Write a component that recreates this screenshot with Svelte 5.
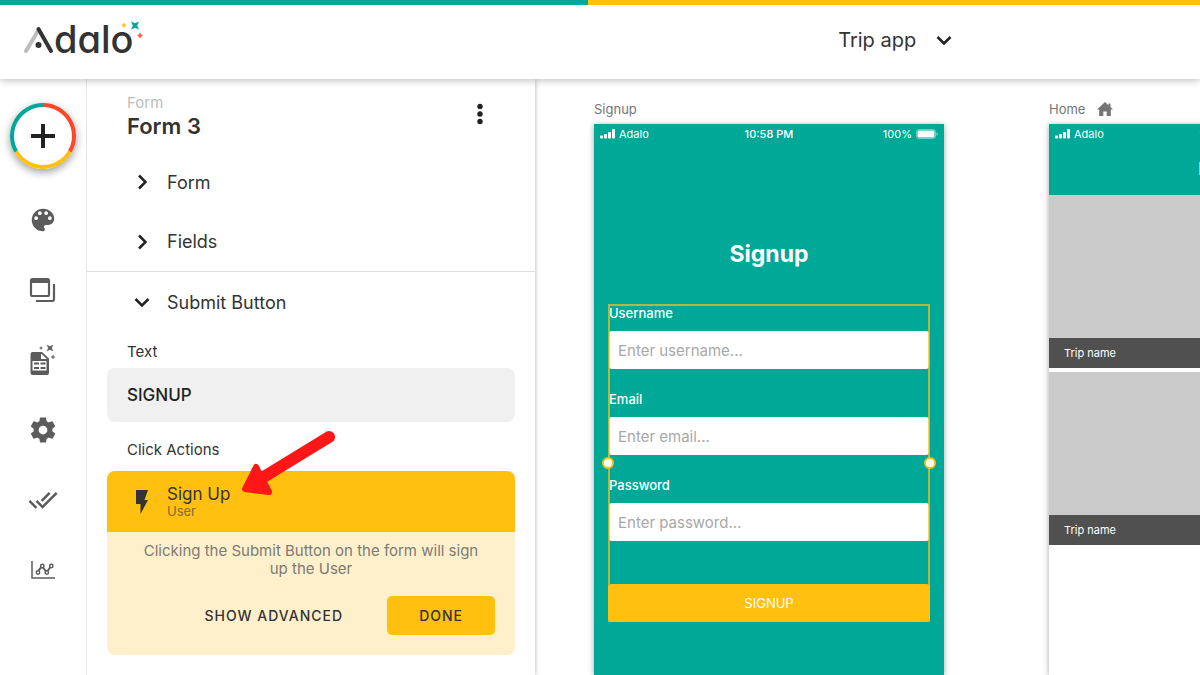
<script lang="ts">
  const tools = ["Branding", "Screens", "Database", "Settings", "Publish", "Analytics"];
  const fields = [
    { id: "username", label: "Username", type: "text", placeholder: "Enter username..." },
    { id: "email", label: "Email", type: "email", placeholder: "Enter email..." },
    { id: "password", label: "Password", type: "password", placeholder: "Enter password..." },
  ];
  const trips = ["Trip name", "Trip name"];

  let buttonText = $state("SIGNUP");
</script>

{#snippet chevron(open: boolean)}
  <svg class="chevron" viewBox="0 0 20 20" aria-hidden="true">
    <path d={open ? "M3.500 7l6.500 6.500L16.500 7" : "M7 3.500l6.500 6.500L7 16.500"} />
  </svg>
{/snippet}

{#snippet statusBar()}
  <div class="status">
    <span class="status__carrier">
      <svg width="15" height="10" viewBox="0 0 15 10" fill="#fff" aria-hidden="true">
        <rect x="0" y="6.500" width="3" height="3" rx=".8" />
        <rect x="4" y="5" width="3" height="4.500" rx=".8" />
        <rect x="8" y="3" width="3" height="6.500" rx=".8" />
        <rect x="12" y="0" width="3" height="9.500" rx=".8" />
      </svg>
      Adalo
    </span>
    <span class="status__time">10:58 PM</span>
    <span class="status__battery">
      100%
      <svg width="22" height="10" viewBox="0 0 22 10" aria-hidden="true">
        <rect x=".5" y=".5" width="19" height="9" rx="2.500" fill="none" stroke="#fff" stroke-opacity=".45" />
        <rect x="1.500" y="1.500" width="17" height="7" rx="1.500" fill="#fff" />
        <path d="M20.500 3.300q1.500.6 1.500 1.700t-1.500 1.700z" fill="#fff" fill-opacity=".5" />
      </svg>
    </span>
  </div>
{/snippet}

<div class="app">
  <header class="topbar">
    <a class="logo" href="#home" aria-label="Adalo">
      <svg class="logo__mark" width="30" height="28" viewBox="0 0 30 28" aria-hidden="true">
        <path d="M2 25L14.500 4" stroke="#bdbdbd" stroke-width="4" stroke-linecap="round" />
        <path d="M14.500 3L27 25" stroke="#333" stroke-width="4" stroke-linecap="round" />
        <circle cx="14.500" cy="19" r="3" fill="#333" />
      </svg>
      <span class="logo__text">dalo</span>
      <svg class="logo__stars" width="22" height="18" viewBox="0 0 22 18" aria-hidden="true">
        <path d="M3 2l.8 1.400 1.400.8-1.400.8L3 6.400 2.200 5 .8 4.200l1.400-.8z" fill="#ffc010" stroke="#ffc010" stroke-width=".6" />
        <path d="M10 .5l4 1.800 4-1.800-1.800 4 1.800 4-4-1.800-4 1.800 1.800-4z" fill="#00a898" />
        <path d="M19 12l.9 1.700 1.700.9-1.700.9-.9 1.700-.9-1.700-1.700-.9 1.700-.9z" fill="#ff5233" stroke="#ff5233" stroke-width=".4" />
      </svg>
    </a>
    <button class="app-menu" type="button">
      Trip app
      {@render chevron(true)}
    </button>
  </header>

  <div class="workspace">
    <nav class="rail" aria-label="Tools">
      <button class="add" type="button" aria-label="Add">
        <svg width="66" height="66" viewBox="0 0 66 66" fill="none" aria-hidden="true">
          <circle cx="33" cy="33" r="32" fill="#fff" />
          <path d="M33 2a31 31 0 0 1 26.850 46.500" stroke="#ff4628" stroke-width="4" />
          <path d="M59.850 48.500a31 31 0 0 1-53.700 0" stroke="#ffc010" stroke-width="4" />
          <path d="M6.150 48.500A31 31 0 0 1 33 2" stroke="#00a898" stroke-width="4" />
          <path d="M33 21v24M21 33h24" stroke="#222" stroke-width="4" />
        </svg>
      </button>
      {#each tools as tool}
        <button class="tool" type="button" aria-label={tool}>
          {#if tool === "Branding"}
            <svg viewBox="0 0 24 24" fill="currentColor">
              <path d="M12 3a9 9 0 0 0 0 18c.83 0 1.500-.67 1.500-1.500 0-.39-.15-.74-.39-1.010-.23-.26-.38-.61-.38-.99 0-.83.67-1.500 1.500-1.500H16a5 5 0 0 0 5-5c0-4.420-4.030-8-9-8zm-5.500 9a1.500 1.500 0 1 1 0-3 1.500 1.500 0 0 1 0 3zm3-4a1.500 1.500 0 1 1 0-3 1.500 1.500 0 0 1 0 3zm5 0a1.500 1.500 0 1 1 0-3 1.500 1.500 0 0 1 0 3zm3 4a1.500 1.500 0 1 1 0-3 1.500 1.500 0 0 1 0 3z" />
            </svg>
          {:else if tool === "Screens"}
            <svg viewBox="0 0 30 30" fill="none" stroke="currentColor" stroke-width="2.200">
              <rect x="3" y="4" width="18" height="17" rx="1.500" />
              <path d="M3 6h18" stroke-width="4" />
              <path d="M26 9v15q0 2-2 2H8" />
            </svg>
          {:else if tool === "Database"}
            <svg viewBox="0 0 30 30" fill="currentColor">
              <path fill-rule="evenodd" d="M4.500 7H14l7 6.500V28q0 2-2 2H4.500q-2 0-2-2V9q0-2 2-2zM13 8.500v5.500h6zM4.500 16v9.500h14V16zM6 17.500h5v2H6zm6.500 0h5v2h-5zM6 22h5v2H6zm6.500 0h5v2h-5z" />
              <path d="M19 0l3 1.400L25 0l-1.400 3L25 6l-3-1.400L19 6l1.400-3zM13 1.500l.5 1 1 .5-1 .5-.5 1-.5-1-1-.5 1-.5zM25 10l.6 1.400L27 12l-1.400.6L25 14l-.6-1.400L23 12l1.400-.6z" stroke="currentColor" stroke-width=".4" />
            </svg>
          {:else if tool === "Settings"}
            <svg viewBox="0 0 24 24" fill="currentColor">
              <path d="M19.430 12.980c.04-.32.07-.64.07-.98s-.03-.66-.07-.98l2.110-1.650c.19-.15.24-.42.12-.64l-2-3.460c-.12-.22-.39-.3-.61-.22l-2.490 1c-.52-.4-1.080-.73-1.690-.98l-.38-2.650A.49.49 0 0 0 14 2h-4c-.25 0-.46.18-.49.42l-.38 2.650c-.61.25-1.170.59-1.690.98l-2.490-1c-.23-.09-.49 0-.61.22l-2 3.460c-.13.22-.07.49.12.64l2.110 1.650c-.04.32-.07.65-.07.98s.03.66.07.98l-2.110 1.650c-.19.15-.24.42-.12.64l2 3.460c.12.22.39.3.61.22l2.490-1c.52.4 1.080.73 1.690.98l.38 2.650c.03.24.24.42.49.42h4c.25 0 .46-.18.49-.42l.38-2.650c.61-.25 1.170-.59 1.690-.98l2.490 1c.23.09.49 0 .61-.22l2-3.460c.12-.22.07-.49-.12-.64l-2.110-1.650zM12 15.500a3.500 3.500 0 1 1 0-7 3.500 3.500 0 0 1 0 7z" />
            </svg>
          {:else if tool === "Publish"}
            <svg viewBox="0 0 24 24" fill="currentColor">
              <path d="M18 7l-1.410-1.410-6.340 6.340 1.410 1.410L18 7zm4.240-1.410L11.660 16.170 7.480 12l-1.410 1.410L11.660 19l12-12-1.420-1.410zM.41 13.410L6 19l1.410-1.410L1.830 12 .41 13.410z" />
            </svg>
          {:else}
            <svg viewBox="0 0 30 30" fill="none" stroke="currentColor" stroke-width="1.500">
              <path d="M4 6v17h23" />
              <path d="M10.500 15.500l3-3.500M15 12.500l3 4M19.500 16l3-4" stroke-width="2" />
              <circle cx="10" cy="17.500" r="1.700" />
              <circle cx="14.300" cy="11" r="1.700" />
              <circle cx="18.800" cy="17.500" r="1.700" />
              <circle cx="23.300" cy="11" r="1.700" />
            </svg>
          {/if}
        </button>
      {/each}
    </nav>

    <aside class="panel">
      <div class="panel__head">
        <div>
          <div class="panel__kind">Form</div>
          <h1>Form 3</h1>
        </div>
        <button class="more" type="button" aria-label="More">
          <svg width="8" height="22" viewBox="0 0 8 22" fill="#222" aria-hidden="true">
            <circle cx="4" cy="3.500" r="2.700" />
            <circle cx="4" cy="11" r="2.700" />
            <circle cx="4" cy="18.500" r="2.700" />
          </svg>
        </button>
      </div>

      <button class="section" type="button" aria-expanded="false">{@render chevron(false)}Form</button>
      <button class="section section--last" type="button" aria-expanded="false">{@render chevron(false)}Fields</button>
      <button class="section" type="button" aria-expanded="true">{@render chevron(true)}Submit Button</button>

      <div class="settings">
        <label for="button-text">Text</label>
        <input id="button-text" type="text" bind:value={buttonText} />

        <h2>Click Actions</h2>
        <section class="action">
          <div class="action__head">
            <svg class="bolt" width="14" height="26" viewBox="0 0 14 26" aria-hidden="true">
              <path d="M1 1h12L9.500 11H13L5.500 25V15H1z" fill="#333" />
            </svg>
            <div>
              <div class="action__name">Sign Up</div>
              <div class="action__target">User</div>
            </div>
            <svg class="pointer" width="96" height="68" viewBox="0 0 96 68" aria-hidden="true">
              <path d="M89 8L22 49" stroke="#ff1616" stroke-width="12" stroke-linecap="round" />
              <path d="M5 60L16 38L29 63z" fill="#ff1616" stroke="#ff1616" stroke-width="6" stroke-linejoin="round" />
            </svg>
          </div>
          <div class="action__body">
            <p>Clicking the Submit Button on the form will sign up the User</p>
            <div class="action__buttons">
              <button class="btn" type="button">SHOW ADVANCED</button>
              <button class="btn btn--primary" type="button">DONE</button>
            </div>
          </div>
        </section>
      </div>
    </aside>

    <main class="canvas">
      <section class="screen">
        <h2 class="screen__name">Signup</h2>
        <div class="phone phone--teal">
          {@render statusBar()}
          <h3 class="phone__title">Signup</h3>
          <form class="signup">
            {#each fields as field}
              <div class="signup__field">
                <label for={field.id}>{field.label}</label>
                <input id={field.id} type={field.type} placeholder={field.placeholder} />
              </div>
            {/each}
            <button class="signup__submit" type="button">{buttonText}</button>
            <div class="selection" aria-hidden="true">
              <span class="handle"></span>
              <span class="handle"></span>
            </div>
          </form>
        </div>
      </section>

      <section class="screen">
        <h2 class="screen__name">
          Home
          <svg width="16" height="14" viewBox="0 0 16 14" fill="#757575" aria-hidden="true">
            <path d="M8 0l3.500 3.200V1.500h2v3.600L16 7.500h-2.200V14H9.700V9.500H6.300V14H2.200V7.500H0z" />
          </svg>
        </h2>
        <div class="phone">
          <div class="phone__bar">
            {@render statusBar()}
            <h3>Home</h3>
          </div>
          <ul class="trips">
            {#each trips as trip}
              <li>
                <div class="trips__image"></div>
                <div class="trips__name">{trip}</div>
              </li>
            {/each}
          </ul>
        </div>
      </section>
    </main>
  </div>
</div>

<style>
  :global(body) {
    margin: 0;
  }

  .app {
    --teal: #00a898;
    --yellow: #ffc010;
    --text: #333;
    display: flex;
    flex-direction: column;
    height: 100vh;
    overflow: hidden;
    background: #fff;
    color: var(--text);
    font-family: Inter, "Liberation Sans", sans-serif;
  }

  h1,
  h2,
  h3,
  p,
  ul {
    margin: 0;
    padding: 0;
    font-weight: 400;
  }

  .app :is(*, *::before) {
    box-sizing: border-box;
  }

  button,
  input {
    border: 0;
    padding: 0;
    background: none;
    color: inherit;
    font: inherit;
  }

  /* top bar */
  .topbar {
    position: relative;
    z-index: 1;
    display: grid;
    grid-template-columns: 9fr 4fr;
    align-items: center;
    flex: none;
    padding: 5px 0 4px 24px;
    height: 79px;
    background: #fff;
    box-shadow: 0 1px 8px rgba(0, 0, 0, 0.28);
  }

  .topbar::before {
    content: "";
    position: absolute;
    inset: 0 0 auto;
    height: 5px;
    background: linear-gradient(90deg, var(--teal) 49%, var(--yellow) 49%);
  }

  .logo {
    position: relative;
    display: flex;
    align-items: center;
    justify-self: start;
    color: var(--text);
    text-decoration: none;
  }

  .logo__text {
    padding-bottom: 2px;
    font-size: 38px;
    font-weight: 500;
    line-height: 44px;
    font-feature-settings: "cv11";
  }

  .logo__stars {
    position: absolute;
    top: 4px;
    left: 97px;
  }

  .app-menu {
    display: flex;
    align-items: center;
    gap: 18px;
    justify-self: start;
    font-size: 20px;
  }

  .chevron {
    flex: none;
    width: 20px;
    height: 20px;
    fill: none;
    stroke: #222;
    stroke-width: 2.5;
  }

  .workspace {
    display: flex;
    flex: 1;
    min-height: 0;
  }

  /* tool rail */
  .rail {
    display: flex;
    flex-direction: column;
    align-items: center;
    flex: none;
    width: 87px;
    padding-top: 24px;
    border-right: 1px solid #e6e6e6;
  }

  .add {
    width: 66px;
    height: 66px;
    margin-bottom: 16px;
    border-radius: 50%;
    box-shadow: 0 3px 8px rgba(0, 0, 0, 0.4);
  }

  .add svg {
    display: block;
  }

  .tool {
    display: grid;
    place-items: center;
    flex: none;
    width: 70px;
    height: 70px;
    color: #5c5c5c;
  }

  .tool svg {
    width: 30px;
    height: 30px;
  }

  /* properties panel */
  .panel {
    flex: none;
    width: 448px;
    box-shadow: 0 0 5px rgba(0, 0, 0, 0.3);
    clip-path: inset(0 -8px 0 0);
  }

  .panel__head {
    display: flex;
    align-items: center;
    justify-content: space-between;
    height: 73px;
    padding: 0 51px 0 40px;
  }

  .panel__kind {
    color: #bdbdbd;
    font-size: 15px;
    line-height: 20px;
  }

  .panel h1 {
    font-size: 22px;
    font-weight: 600;
    line-height: 26px;
  }

  .section {
    display: flex;
    align-items: center;
    gap: 15px;
    width: 100%;
    height: 60px;
    padding-left: 45px;
    font-size: 18px;
  }

  .section--last {
    border-bottom: 1px solid #dedede;
  }

  .settings {
    display: flex;
    flex-direction: column;
    padding: 10px 20px;
  }

  .settings > label,
  .settings > h2 {
    padding-left: 20px;
    font-size: 15px;
    line-height: 20px;
  }

  .settings > input {
    height: 54px;
    margin: 6px 0 18px;
    padding: 0 20px;
    border-radius: 8px;
    background: #f0f0f0;
    color: #222;
    font-size: 17px;
    font-weight: 500;
  }

  .action {
    margin-top: 11px;
    border-radius: 8px;
    background: #fff0cc;
    font-size: 15px;
  }

  .action__head {
    position: relative;
    display: flex;
    align-items: center;
    gap: 18px;
    height: 61px;
    padding-left: 28px;
    border-radius: 8px 8px 0 0;
    background: var(--yellow);
  }

  .action__name {
    font-size: 17px;
    line-height: 18px;
  }

  .action__target {
    color: #806d3a;
    font-size: 13px;
    line-height: 16px;
  }

  .pointer {
    position: absolute;
    top: -42px;
    left: 133px;
  }

  .action__body {
    padding: 10px 20px 20px;
  }

  .action__body p {
    padding: 0 10px;
    color: #7c7a74;
    line-height: 18px;
    text-align: center;
  }

  .action__buttons {
    display: flex;
    justify-content: flex-end;
    gap: 12px;
    margin-top: 18px;
  }

  .btn {
    height: 39px;
    padding: 0 32px;
    border-radius: 5px;
    font-size: 14px;
    font-weight: 500;
    letter-spacing: 1px;
  }

  .btn--primary {
    background: var(--yellow);
  }

  /* screens */
  .canvas {
    display: flex;
    align-items: stretch;
    gap: 105px;
    flex: 1;
    min-width: 0;
    overflow: hidden;
    padding: 20px 0 0 59px;
  }

  .screen {
    display: flex;
    flex-direction: column;
    flex: none;
    width: 350px;
  }

  .screen__name {
    display: flex;
    align-items: center;
    gap: 12px;
    margin-bottom: 5px;
    color: #757575;
    font-size: 13px;
    line-height: 20px;
  }

  .phone {
    flex: 1;
    background: #fff;
    box-shadow: 0 1px 6px rgba(0, 0, 0, 0.35);
  }

  .phone--teal,
  .phone__bar {
    background: var(--teal);
    color: #fff;
  }

  .status {
    display: grid;
    grid-template-columns: 1fr auto 1fr;
    align-items: center;
    height: 20px;
    padding: 0 6px;
    font-size: 11px;
  }

  .status__carrier,
  .status__battery {
    display: flex;
    align-items: center;
    gap: 4px;
  }

  .status__battery {
    justify-content: flex-end;
  }

  .status__time {
    font-weight: 500;
  }

  .phone__title {
    margin: 95px 0 35px;
    font-size: 23px;
    font-weight: 700;
    line-height: 30px;
    text-align: center;
  }

  .signup {
    position: relative;
    margin: 0 14px;
  }

  .signup__field {
    display: flex;
    flex-direction: column;
    gap: 9px;
    margin-bottom: 21px;
    padding: 0 1px;
  }

  .signup__field label {
    font-size: 13px;
    font-weight: 500;
    line-height: 18px;
  }

  .signup__field input {
    height: 38px;
    padding: 0 9px;
    border-radius: 3px;
    background: #fff;
    color: var(--text);
    font-size: 15px;
  }

  .signup__field input::placeholder {
    color: #a8a8a8;
  }

  .signup__submit {
    display: block;
    width: 100%;
    height: 38px;
    margin-top: 43px;
    border-radius: 4px;
    background: var(--yellow);
    font-size: 13px;
  }

  .selection {
    position: absolute;
    inset: 0;
    display: flex;
    align-items: center;
    justify-content: space-between;
    margin: 0 -6px;
    pointer-events: none;
  }

  .selection::before {
    content: "";
    position: absolute;
    inset: 0 6px;
    border: 2px solid rgba(255, 192, 16, 0.7);
  }

  .handle {
    position: relative;
    width: 12px;
    height: 12px;
    border: 2px solid var(--yellow);
    border-radius: 50%;
    background: #fff;
  }

  .phone__bar {
    height: 71px;
  }

  .phone__bar h3 {
    font-size: 18px;
    font-weight: 700;
    line-height: 50px;
    text-align: center;
  }

  .trips {
    display: grid;
    gap: 4px;
    list-style: none;
  }

  .trips__image {
    height: 143px;
    background: #cbcbcb;
  }

  .trips__name {
    padding-left: 15px;
    background: #505050;
    color: #fff;
    font-size: 11px;
    line-height: 30px;
  }
</style>
